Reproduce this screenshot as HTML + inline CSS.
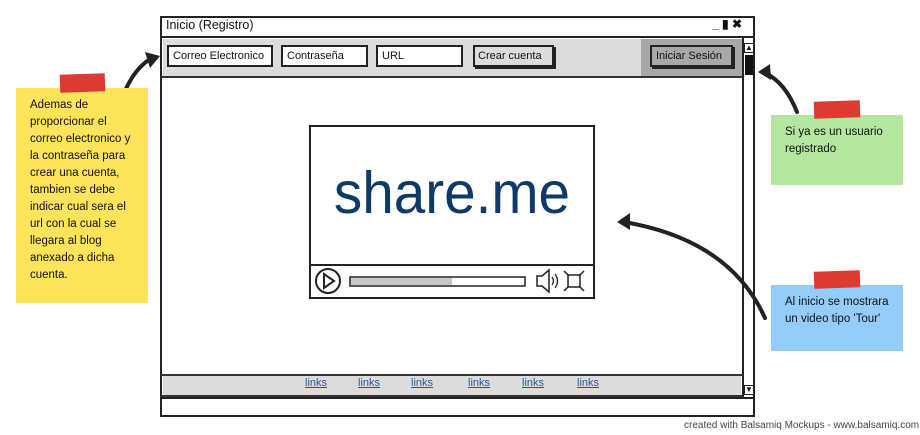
<!DOCTYPE html>
<html><head><meta charset="utf-8"><style>
body{margin:0;width:920px;height:435px;background:#fff;position:relative;overflow:hidden;font-family:"Liberation Sans",sans-serif;color:#111}
div{position:absolute;box-sizing:border-box}
.in{border:2px solid #222;background:#fff;font-size:11px;padding:2px 4px;height:22px;line-height:15px;white-space:nowrap;overflow:hidden}
.note{font-size:11.5px;line-height:17px;padding:9px 14px}
.tape{background:#dd3a33;transform:rotate(-2deg)}
.lk{top:377px;font-size:11px;color:#1f5a9e;text-decoration:underline}
</style></head><body>
<div style="left:160px;top:16px;width:595px;height:401px;border:2px solid #222;background:#fff"></div>
<div style="left:161px;top:36px;width:593px;height:2px;background:#222"></div>
<div style="left:166px;top:18px;font-size:12.5px">Inicio (Registro)</div>
<div style="left:712px;top:17px;font-size:12px;font-weight:bold">_ ▮ ✖</div>
<div style="left:163px;top:39px;width:579px;height:37px;background:#dcdcdc"></div>
<div style="left:641px;top:39px;width:101px;height:37px;background:#a8a8a8"></div>
<div style="left:161px;top:76px;width:582px;height:2px;background:#333"></div>
<div class="in" style="left:167px;top:45px;width:106px">Correo Electronico</div>
<div class="in" style="left:281px;top:45px;width:87px">Contraseña</div>
<div class="in" style="left:376px;top:45px;width:87px">URL</div>
<div class="in" style="left:473px;top:45px;width:81px;background:#dcdcdc;box-shadow:2px 2px 0 #222;padding-left:3px">Crear cuenta</div>
<div class="in" style="left:650px;top:45px;width:83px;background:#a8a8a8;box-shadow:2px 2px 0 #222">Iniciar Sesión</div>
<div style="left:742px;top:38px;width:2px;height:359px;background:#222"></div>
<div style="left:744px;top:43px;width:10px;height:10px;border:1px solid #222;font-size:8px;line-height:8px;text-align:center">▲</div>
<div style="left:745px;top:55px;width:8px;height:20px;background:#111"></div>
<div style="left:744px;top:385px;width:10px;height:10px;border:1px solid #222;font-size:8px;line-height:8px;text-align:center">▼</div>
<div style="left:161px;top:374px;width:582px;height:2px;background:#333"></div>
<div style="left:163px;top:376px;width:578px;height:19px;background:#dcdcdc"></div>
<div style="left:161px;top:395px;width:582px;height:2px;background:#333"></div>
<div style="left:161px;top:397px;width:594px;height:2px;background:#222"></div>
<div class="lk" style="left:305px">links</div><div class="lk" style="left:358px">links</div>
<div class="lk" style="left:411px">links</div><div class="lk" style="left:468px">links</div>
<div class="lk" style="left:522px">links</div><div class="lk" style="left:577px">links</div>
<div style="left:309px;top:125px;width:286px;height:174px;border:2px solid #222"></div>
<div style="left:310px;top:264px;width:284px;height:2px;background:#222"></div>
<div style="left:309px;top:158px;width:286px;text-align:center;font-size:59px;line-height:70px;color:#0d3a66;transform:scaleX(0.96)">share.me</div>
<svg style="position:absolute;left:0;top:0" width="920" height="435">
<circle cx="328" cy="281" r="12" fill="none" stroke="#222" stroke-width="2"/>
<path d="M324 274 L334 281 L324 288 Z" fill="none" stroke="#222" stroke-width="2"/>
<rect x="350" y="277" width="175" height="9" fill="#fff" stroke="#222" stroke-width="1.5"/>
<rect x="351" y="278" width="101" height="7" fill="#c8c8c8"/>
<path d="M537 276 h5 l7 -6 v22 l-7 -6 h-5 z" fill="none" stroke="#222" stroke-width="1.5"/>
<path d="M552 277 q3 4 0 8 M555 274 q5 7 0 14" fill="none" stroke="#222" stroke-width="1.3"/>
<rect x="568" y="275" width="12" height="12" fill="none" stroke="#222" stroke-width="1.5"/>
<path d="M564 271 l5 5 M584 271 l-5 5 M564 291 l5 -5 M584 291 l-5 -5" stroke="#222" stroke-width="1.5"/>
<g fill="none" stroke="#222" stroke-width="4" stroke-linecap="round">
<path d="M118 110 Q130 70 152 58"/>
<path d="M797 112 Q785 82 765 73"/>
<path d="M765 318 Q730 240 624 222"/>
</g>
<g fill="#222">
<path d="M145 52 L160 56 L150 68 Z"/>
<path d="M770 64 L758 72 L771 80 Z"/>
<path d="M630 213 L617 222 L630 230 Z"/>
</g>
</svg>
<div class="note" style="left:16px;top:88px;width:132px;height:215px;background:#fde45a">Ademas de proporcionar el correo electronico y la contraseña para crear una cuenta, tambien se debe indicar cual sera el url con la cual se llegara al blog anexado a dicha cuenta.</div>
<div class="tape" style="left:60px;top:74px;width:45px;height:18px"></div>
<div class="note" style="left:771px;top:115px;width:132px;height:70px;background:#b5e6a0">Si ya es un usuario registrado</div>
<div class="tape" style="left:814px;top:101px;width:46px;height:17px"></div>
<div class="note" style="left:771px;top:285px;width:132px;height:66px;background:#94ccfa">Al inicio se mostrara un video tipo 'Tour'</div>
<div class="tape" style="left:814px;top:271px;width:46px;height:17px"></div>
<div style="left:684px;top:420px;font-size:10px;color:#444">created with Balsamiq Mockups - www.balsamiq.com</div>
</body></html>
